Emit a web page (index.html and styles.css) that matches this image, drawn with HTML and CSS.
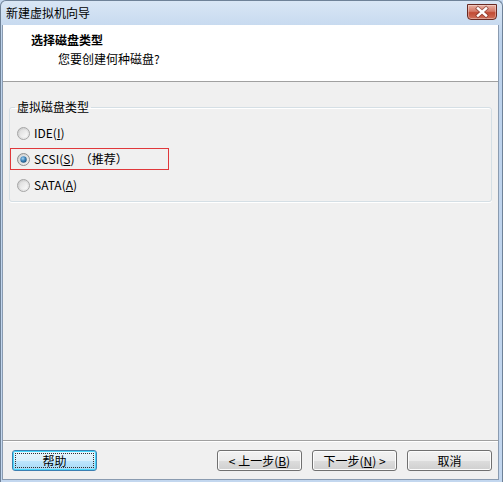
FILE: index.html
```html
<!DOCTYPE html>
<html>
<head>
<meta charset="utf-8">
<link rel="stylesheet" href="styles.css">
</head>
<body>
<div class="window">
  <div class="titlebar">
    <span class="title">新建虚拟机向导</span>
    <div class="close">
      <svg width="30" height="16" viewBox="0 0 30 16">
        <path d="M11 4.5 L19 11.5 M19 4.5 L11 11.5" stroke="#6b2a22" stroke-width="4.2" stroke-linecap="square" fill="none" opacity="0.55"/>
        <path d="M11 4.5 L19 11.5 M19 4.5 L11 11.5" stroke="#ffffff" stroke-width="2.4" stroke-linecap="square" fill="none"/>
      </svg>
    </div>
  </div>
  <div class="client">
    <div class="header">
      <div class="h-title">选择磁盘类型</div>
      <div class="h-sub">您要创建何种磁盘?</div>
    </div>
    <div class="content">
      <fieldset class="group">
        <legend class="group-label">虚拟磁盘类型</legend>
        <div class="options">
          <div class="opt">
            <svg class="radio" width="13" height="13" viewBox="0 0 13 13">
              <defs>
                <linearGradient id="ro" x1="0" y1="0" x2="1" y2="1"><stop offset="0" stop-color="#c9c9c9"/><stop offset="1" stop-color="#f4f4f4"/></linearGradient>
                <linearGradient id="ri" x1="0" y1="0" x2="1" y2="1"><stop offset="0" stop-color="#dcdcdc"/><stop offset="1" stop-color="#fbfbfb"/></linearGradient>
              </defs>
              <circle cx="6.5" cy="6.5" r="6" fill="url(#ro)" stroke="#a6a6a6" stroke-width="1"/>
              <circle cx="6.5" cy="6.5" r="4" fill="url(#ri)"/>
            </svg>
            <span>IDE(<u>I</u>)</span>
          </div>
          <div class="opt opt-hl">
            <svg class="radio" width="13" height="13" viewBox="0 0 13 13">
              <defs>
                <radialGradient id="rd" cx="0.4" cy="0.35" r="0.7"><stop offset="0" stop-color="#a9d4f2"/><stop offset="0.5" stop-color="#3f86bd"/><stop offset="1" stop-color="#1b4f78"/></radialGradient>
              </defs>
              <circle cx="6.5" cy="6.5" r="6" fill="url(#ro)" stroke="#8e8f8f" stroke-width="1"/>
              <circle cx="6.5" cy="6.5" r="4" fill="#e8e8e8"/>
              <circle cx="6.5" cy="6.5" r="3.2" fill="url(#rd)"/>
            </svg>
            <span>SCSI(<u>S</u>)&nbsp;&nbsp;（推荐）</span>
          </div>
          <div class="opt">
            <svg class="radio" width="13" height="13" viewBox="0 0 13 13">
              <circle cx="6.5" cy="6.5" r="6" fill="url(#ro)" stroke="#a6a6a6" stroke-width="1"/>
              <circle cx="6.5" cy="6.5" r="4" fill="url(#ri)"/>
            </svg>
            <span>SATA(<u>A</u>)</span>
          </div>
        </div>
      </fieldset>
    </div>
    <div class="footer">
      <div class="btn btn-default"><span class="focus">帮助</span></div>
      <div class="btn-group">
        <div class="btn">&lt; 上一步(<u>B</u>)</div>
        <div class="btn">下一步(<u>N</u>) &gt;</div>
        <div class="btn btn-cancel">取消</div>
      </div>
    </div>
  </div>
</div>
</body>
</html>
```

FILE: styles.css
```css
* { box-sizing: border-box; }
html, body { margin: 0; padding: 0; }
body {
  width: 503px;
  height: 482px;
  overflow: hidden;
  font-family: "Noto Sans CJK SC", "Microsoft YaHei", sans-serif;
  font-size: 12px;
  line-height: 16px;
  color: #000;
  background: #c4d7ee;
}
.window {
  width: 503px;
  height: 482px;
  display: flex;
  flex-direction: column;
  background: linear-gradient(#d9e6f5, #bcd2ec 40px, #c3d7ef);
  border: 1px solid #6f8298;
  border-bottom: none;
  border-radius: 6px 6px 0 0;
  padding-bottom: 2px;
}
.titlebar {
  height: 24px;
  flex: none;
  display: flex;
  align-items: center;
  justify-content: space-between;
  padding: 0 5px 0 5px;
}
.title { color: #000; font-size: 12px; }
.close {
  width: 30px;
  height: 16px;
  margin-top: -2px;
  border: 1px solid #6a2a22;
  border-radius: 0 0 4px 4px;
  background: linear-gradient(#eab1a3, #d47967 45%, #c14a33 55%, #d0705a);
  display: flex;
  box-shadow: inset 0 0 0 1px rgba(255,255,255,0.35);
}
.close svg { display: block; margin: -1px; }
.client {
  flex: 1;
  display: flex;
  flex-direction: column;
  margin: 0 3px 0 1px;
  border: 1px solid #8a9bb0;
  border-top: none;
  background: #f0f0f0;
}
.header {
  height: 57px;
  flex: none;
  background: #fff;
  border-bottom: 1px solid #a0a0a0;
  padding: 7px 0 0 28px;
}
.h-title { font-weight: bold; }
.h-sub { margin-top: 3px; padding-left: 27px; }
.content {
  flex: 1;
  padding: 17px 6px 0 6px;
}
.group {
  margin: 0;
  padding: 0 0 5px 0;
  border: 1px solid #d5dfe5;
  border-radius: 3px;
  box-shadow: 0 1px 0 #ffffff, inset 0 1px 0 #ffffff;
}
.group-label {
  margin-left: 5px;
  padding: 0 2px;
  line-height: 16px;
}
.options {
  display: flex;
  flex-direction: column;
  gap: 4px;
  padding-top: 7px;
}
.opt {
  height: 22px;
  width: 159px;
  display: flex;
  align-items: center;
  border: 1px solid transparent;
  padding-left: 6px;
  gap: 4px;
}
.opt-hl { border-color: #e0383b; }
.radio { display: block; flex: none; }
.opt u { text-decoration: underline; text-underline-offset: 1px; }
.footer {
  flex: none;
  display: flex;
  align-items: flex-start;
  border-top: 1px solid #a0a0a0;
  box-shadow: inset 0 1px 0 #ffffff;
  padding: 9px 6px 8px 9px;
}
.btn-group {
  margin-left: auto;
  display: flex;
  gap: 10px;
}
.btn {
  width: 85px;
  height: 21px;
  display: flex;
  align-items: center;
  justify-content: center;
  border: 1px solid #707070;
  border-radius: 3px;
  background: linear-gradient(#f2f2f2, #ebebeb 50%, #dddddd 51%, #cfcfcf);
  box-shadow: inset 0 0 0 1px #fcfcfc;
  line-height: 16px;
}
.btn u { text-decoration: underline; }
.btn-default {
  border-color: #3c7fb1;
  background: linear-gradient(#eaf6fd, #d9f0fc 50%, #bee6fd 51%, #a7d9f5);
  box-shadow: inset 0 0 0 1px #48d8fb;
  padding: 2px;
}
.focus {
  flex: 1;
  align-self: stretch;
  display: flex;
  align-items: center;
  justify-content: center;
  border: 1px dotted #303030;
}
```
